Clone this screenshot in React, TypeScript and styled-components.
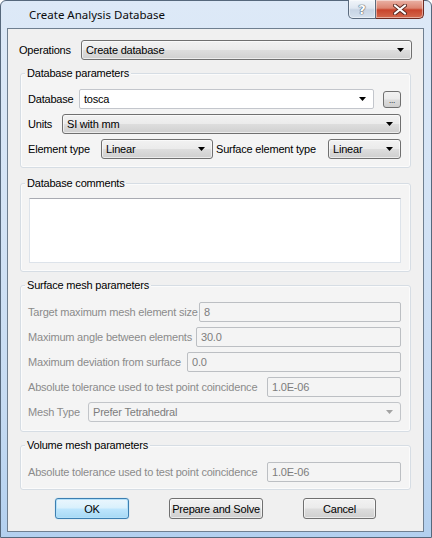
import React from 'react';
import styled, { createGlobalStyle } from 'styled-components';

const GlobalStyle = createGlobalStyle`
  html, body {
    margin: 0;
    padding: 0;
    background: #ffffff;
  }
  body {
    font-family: "Liberation Sans", Arial, sans-serif;
    font-size: 11px;
    letter-spacing: -0.2px;
  }
`;

const Window = styled.div`
  box-sizing: border-box;
  width: 432px;
  height: 538px;
  display: flex;
  flex-direction: column;
  padding: 0 7px 5px 6px;
  border: 1px solid #56687c;
  border-radius: 6px 6px 0 0;
  background: linear-gradient(to bottom, #dde9f7 0%, #d3e3f5 40%, #c6dbf2 75%, #b3d0ef 100%);
`;

const TitleBar = styled.div`
  display: flex;
  align-items: flex-start;
  height: 27px;
  flex: none;
`;

const TitleText = styled.div`
  flex: 1;
  padding: 6px 0 0 22px;
  font-family: "Noto Sans", "Open Sans", sans-serif;
  font-size: 11.5px;
  letter-spacing: 0;
  line-height: 16px;
  color: #0b0b0b;
`;

const CaptionButton = styled.div<{ $close?: boolean }>`
  box-sizing: border-box;
  height: 19px;
  margin-top: -1px;
  width: ${p => (p.$close ? '48px' : '28px')};
  display: flex;
  align-items: center;
  justify-content: center;
  border: 1px solid ${p => (p.$close ? '#6d2a21' : '#5b6b7e')};
  border-top: none;
  border-left-width: ${p => (p.$close ? '0' : '1px')};
  border-radius: ${p => (p.$close ? '0 0 5px 0' : '0 0 0 5px')};
  background: ${p =>
    p.$close
      ? 'linear-gradient(to bottom, #eab2a6 0%, #dc8571 45%, #c8442c 55%, #d46a4e 100%)'
      : 'linear-gradient(to bottom, #f1f5fa 0%, #dfe7f1 45%, #c7d4e4 55%, #d5e1ee 100%)'};
  box-shadow: inset 0 0 0 1px rgba(255, 255, 255, 0.45);
  font-family: "DejaVu Sans", sans-serif;
  font-weight: bold;
  font-size: 13px;
  color: #ffffff;
  text-shadow: 0 0 1px #4a5666, 0 0 1px #4a5666, 0 0 1px #4a5666;
`;

const Client = styled.div`
  flex: 1;
  display: flex;
  flex-direction: column;
  padding: 11px 12px 0 11px;
  border: 1px solid #6f7f90;
  background: #f0f0f0;
  color: #000000;
`;

const Row = styled.div`
  display: flex;
  align-items: center;
  height: 20px;
  flex: none;
`;

const Label = styled.span<{ $w: number; $disabled?: boolean }>`
  flex: none;
  box-sizing: border-box;
  width: ${p => p.$w}px;
  white-space: nowrap;
  line-height: 20px;
  color: ${p => (p.$disabled ? '#8b8b8b' : '#000000')};
`;

const GroupBox = styled.section<{ $mt: number; $pt: number; $pb: number }>`
  display: flex;
  flex-direction: column;
  gap: 5px;
  margin: ${p => p.$mt}px 0 0 1px;
  padding: 0 9px ${p => p.$pb}px 7px;
  border: 1px solid #d6dde4;
  border-radius: 3px;
  background: #f4f4f4;
  box-shadow: inset 0 0 0 1px #fbfbfb;
  & > h2 {
    margin-bottom: ${p => p.$pt - 5}px;
  }
`;

const GroupTitle = styled.h2`
  align-self: flex-start;
  height: 14px;
  margin: -8px 0 0 -3px;
  padding: 0 2px;
  font-size: 11px;
  font-weight: normal;
  line-height: 14px;
  color: #000000;
  background: linear-gradient(to bottom, #f0f0f0 0%, #f0f0f0 50%, #f4f4f4 50%, #f4f4f4 100%);
`;

const ComboBox = styled.div<{ $w?: number; $disabled?: boolean; $editable?: boolean }>`
  box-sizing: border-box;
  height: 20px;
  ${p => (p.$w ? `width: ${p.$w}px; flex: none;` : 'flex: 1;')}
  display: flex;
  align-items: center;
  justify-content: space-between;
  padding: 0 7px 0 4px;
  border: 1px solid ${p => (p.$disabled ? '#c2c5c9' : p.$editable ? '#c3c6cc' : '#707070')};
  border-radius: ${p => (p.$editable ? '2px' : '3px')};
  background: ${p =>
    p.$disabled
      ? '#f4f4f4'
      : p.$editable
      ? '#ffffff'
      : 'linear-gradient(to bottom, #f2f2f2 0%, #ebebeb 48%, #dddddd 52%, #cfcfcf 100%)'};
  color: ${p => (p.$disabled ? '#7d7d7d' : '#000000')};
  box-shadow: ${p => (p.$disabled || p.$editable ? 'none' : 'inset 0 0 0 1px rgba(255,255,255,0.6)')};
`;

const LineEdit = styled.div`
  box-sizing: border-box;
  flex: 1;
  height: 20px;
  display: flex;
  align-items: center;
  padding: 0 4px;
  border: 1px solid #bcbfc3;
  border-radius: 2px;
  background: #f4f4f4;
  color: #7d7d7d;
`;

const Ellipsis = styled.div`
  box-sizing: border-box;
  flex: none;
  width: 18px;
  height: 17px;
  margin-left: 9px;
  display: flex;
  align-items: flex-end;
  justify-content: center;
  padding-bottom: 2px;
  border: 1px solid #707070;
  border-radius: 3px;
  background: linear-gradient(to bottom, #f2f2f2 0%, #ebebeb 48%, #dddddd 52%, #cfcfcf 100%);
  font-size: 8px;
  line-height: 8px;
  color: #000;
`;

const CommentBox = styled.div`
  box-sizing: border-box;
  height: 65px;
  margin-left: 1px;
  border: 1px solid #dde3ea;
  border-top-color: #a9abb2;
  background: #ffffff;
`;

const ButtonBar = styled.div`
  display: flex;
  gap: 40px;
  margin-top: 8px;
  padding-left: 36px;
`;

const PushButton = styled.div<{ $w: number; $default?: boolean }>`
  box-sizing: border-box;
  width: ${p => p.$w}px;
  height: 21px;
  display: flex;
  align-items: center;
  justify-content: center;
  border: 1px solid ${p => (p.$default ? '#3c7fb1' : '#707070')};
  border-radius: 3px;
  background: ${p =>
    p.$default
      ? 'linear-gradient(to bottom, #eaf6fd 0%, #d9f0fc 48%, #bee6fd 52%, #a7d9f5 100%)'
      : 'linear-gradient(to bottom, #f2f2f2 0%, #ebebeb 48%, #dddddd 52%, #cfcfcf 100%)'};
  box-shadow: ${p =>
    p.$default ? 'inset 0 0 0 1px #b3e0f9, 0 0 1px #6fc1ee' : 'inset 0 0 0 1px rgba(255,255,255,0.6)'};
  color: #000;
`;

const Arrow = ({ disabled }: { disabled?: boolean }) => (
  <svg width="7" height="4" viewBox="0 0 7 4">
    <path d="M0 0 H7 L3.5 4 Z" fill={disabled ? '#a3a3a3' : '#000000'} />
  </svg>
);

const CloseGlyph = () => (
  <svg width="14" height="11" viewBox="0 0 14 11">
    <path d="M2 1.5 L12 9.5 M12 1.5 L2 9.5" stroke="#5a2a22" strokeWidth="4" strokeLinecap="round" />
    <path d="M2 1.5 L12 9.5 M12 1.5 L2 9.5" stroke="#ffffff" strokeWidth="2.2" strokeLinecap="round" />
  </svg>
);

const surfaceRows = [
  { label: 'Target maximum mesh element size', w: 171, value: '8' },
  { label: 'Maximum angle between elements', w: 168, value: '30.0' },
  { label: 'Maximum deviation from surface', w: 159, value: '0.0' },
  { label: 'Absolute tolerance used to test point coincidence', w: 239, value: '1.0E-06' },
];

const App = () => {
  return (
    <>
      <GlobalStyle />
      <Window>
        <TitleBar>
          <TitleText>Create Analysis Database</TitleText>
          <CaptionButton>?</CaptionButton>
          <CaptionButton $close>
            <CloseGlyph />
          </CaptionButton>
        </TitleBar>
        <Client>
          <Row>
            <Label $w={62}>Operations</Label>
            <ComboBox style={{ marginRight: -1 }}>
              <span>Create database</span>
              <Arrow />
            </ComboBox>
          </Row>

          <GroupBox $mt={13} $pt={9} $pb={8}>
            <GroupTitle>Database parameters</GroupTitle>
            <Row>
              <Label $w={51}>Database</Label>
              <ComboBox $editable>
                <span>tosca</span>
                <Arrow />
              </ComboBox>
              <Ellipsis>...</Ellipsis>
            </Row>
            <Row>
              <Label $w={34}>Units</Label>
              <ComboBox>
                <span>SI with mm</span>
                <Arrow />
              </ComboBox>
            </Row>
            <Row>
              <Label $w={73}>Element type</Label>
              <ComboBox $w={112}>
                <span>Linear</span>
                <Arrow />
              </ComboBox>
              <Label $w={115} style={{ paddingLeft: 3 }}>Surface element type</Label>
              <ComboBox>
                <span>Linear</span>
                <Arrow />
              </ComboBox>
            </Row>
          </GroupBox>

          <GroupBox $mt={15} $pt={8} $pb={8}>
            <GroupTitle>Database comments</GroupTitle>
            <CommentBox />
          </GroupBox>

          <GroupBox $mt={13} $pt={10} $pb={9}>
            <GroupTitle>Surface mesh parameters</GroupTitle>
            {surfaceRows.map(r => (
              <Row key={r.label}>
                <Label $w={r.w} $disabled>{r.label}</Label>
                <LineEdit>{r.value}</LineEdit>
              </Row>
            ))}
            <Row>
              <Label $w={60} $disabled>Mesh Type</Label>
              <ComboBox $disabled>
                <span>Prefer Tetrahedral</span>
                <Arrow disabled />
              </ComboBox>
            </Row>
          </GroupBox>

          <GroupBox $mt={13} $pt={10} $pb={7}>
            <GroupTitle>Volume mesh parameters</GroupTitle>
            <Row>
              <Label $w={239} $disabled>Absolute tolerance used to test point coincidence</Label>
              <LineEdit>1.0E-06</LineEdit>
            </Row>
          </GroupBox>

          <ButtonBar>
            <PushButton $w={74} $default>OK</PushButton>
            <PushButton $w={94}>Prepare and Solve</PushButton>
            <PushButton $w={73}>Cancel</PushButton>
          </ButtonBar>
        </Client>
      </Window>
    </>
  );
};

export default App;
